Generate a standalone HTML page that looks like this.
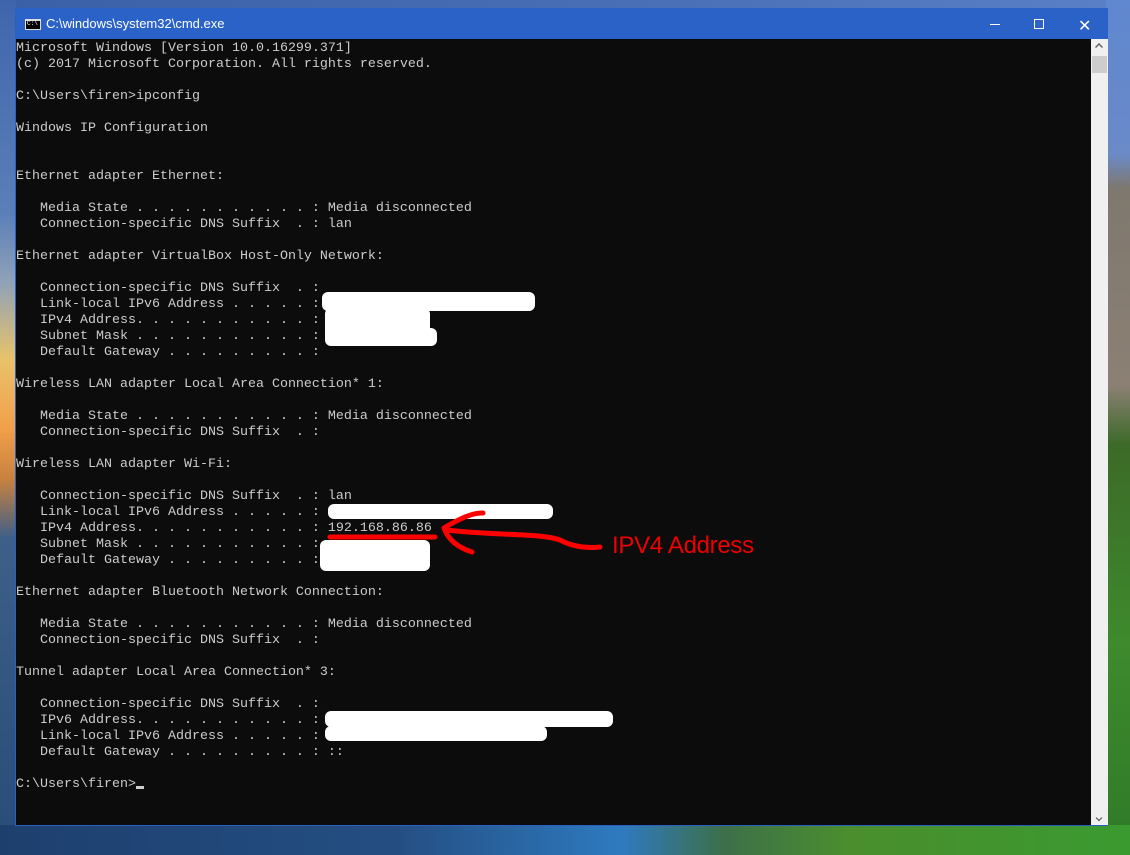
<!DOCTYPE html>
<html><head><meta charset="utf-8"><style>
*{margin:0;padding:0;box-sizing:border-box}
html,body{width:1130px;height:855px;overflow:hidden}
body{position:relative;background:#2a4f86}
.bgL{position:absolute;left:0;top:0;width:16px;height:855px;background:linear-gradient(180deg,#3f66ad 0%,#5a7fb8 25%,#8fa2b8 33%,#e8c26a 42%,#f2a04a 50%,#c8823e 56%,#3d5f88 63%,#284c78 100%)}
.bgR{position:absolute;right:0;top:0;width:24px;height:855px;background:linear-gradient(180deg,#5f87cf 0%,#6a8ac8 18%,#7e786e 22%,#8c8074 45%,#3c6a28 52%,#3e8a2c 75%,#2f7a28 100%)}
.bgT{position:absolute;left:0;top:0;width:1130px;height:10px;background:linear-gradient(90deg,#3a60a8,#4a70b8 60%,#5a80c8)}
.bgB{position:absolute;left:0;top:825px;width:1130px;height:30px;background:linear-gradient(90deg,#1d3f6e 0%,#244e82 35%,#2e7ac0 55%,#3d6f4a 64%,#4a8e2e 75%,#3a9a30 100%)}
.win{position:absolute;left:15px;top:8px;width:1093px;height:818px;background:#0c0c0c;border:1px solid #2a5fc4}
.title{position:absolute;left:0;top:0;width:100%;height:30px;background:#2b62c8;color:#fff;font:13px "Liberation Sans",sans-serif}
.title .t{position:absolute;left:30px;top:7px}
.ico{position:absolute;left:9px;top:10px;width:16px;height:11px;background:#000;border:1px solid #ddd;border-top:2px solid #ddd}
.ico:after{content:"C:\\";position:absolute;left:1px;top:-1px;font:6px "Liberation Mono",monospace;color:#fff}
.min{position:absolute;left:974px;top:15px;width:10px;height:1px;background:#fff}
.max{position:absolute;left:1018px;top:10px;width:10px;height:10px;border:1px solid #fff}
.cls{position:absolute;left:1062px;top:7px;color:#fff;font:16px "Liberation Sans",sans-serif}
.sb{position:absolute;left:1075px;top:30px;width:17px;height:786px;background:#f0f0f0}
.thumb{position:absolute;left:1px;top:17px;width:15px;height:17px;background:#cdcdcd}
.up{position:absolute;left:4px;top:4px;width:8px;height:8px;border-left:2px solid #606060;border-top:2px solid #606060;transform:rotate(45deg) scale(.7)}
.dn{position:absolute;left:4px;bottom:3px;width:8px;height:8px;border-right:2px solid #606060;border-bottom:2px solid #606060;transform:rotate(45deg) scale(.6)}
pre{position:absolute;left:0px;top:32px;font:13.33px/16px "Liberation Mono",monospace;color:#cccccc;white-space:pre}
.cur{display:inline-block;width:8px;height:3px;background:#ccc;vertical-align:-2px}
.w{position:absolute;background:#fff;border-radius:6px}
.lbl{position:absolute;left:612px;top:532px;color:#ee0000;font:24px "Liberation Sans",sans-serif;letter-spacing:-0.3px}
</style></head><body>
<div class="bgT"></div><div class="bgL"></div><div class="bgR"></div><div class="bgB"></div>
<div class="win">
<div class="title"><div class="ico"></div><div class="t">C:\windows\system32\cmd.exe</div><div class="min"></div><div class="max"></div><div class="cls">✕</div></div>
<pre>Microsoft Windows [Version 10.0.16299.371]
(c) 2017 Microsoft Corporation. All rights reserved.

C:\Users\firen>ipconfig

Windows IP Configuration


Ethernet adapter Ethernet:

   Media State . . . . . . . . . . . : Media disconnected
   Connection-specific DNS Suffix  . : lan

Ethernet adapter VirtualBox Host-Only Network:

   Connection-specific DNS Suffix  . :
   Link-local IPv6 Address . . . . . :
   IPv4 Address. . . . . . . . . . . :
   Subnet Mask . . . . . . . . . . . :
   Default Gateway . . . . . . . . . :

Wireless LAN adapter Local Area Connection* 1:

   Media State . . . . . . . . . . . : Media disconnected
   Connection-specific DNS Suffix  . :

Wireless LAN adapter Wi-Fi:

   Connection-specific DNS Suffix  . : lan
   Link-local IPv6 Address . . . . . :
   IPv4 Address. . . . . . . . . . . : 192.168.86.86
   Subnet Mask . . . . . . . . . . . :
   Default Gateway . . . . . . . . . :

Ethernet adapter Bluetooth Network Connection:

   Media State . . . . . . . . . . . : Media disconnected
   Connection-specific DNS Suffix  . :

Tunnel adapter Local Area Connection* 3:

   Connection-specific DNS Suffix  . :
   IPv6 Address. . . . . . . . . . . :
   Link-local IPv6 Address . . . . . :
   Default Gateway . . . . . . . . . : ::

C:\Users\firen&gt;<span class="cur"></span></pre>
<div class="sb"><div class="up"></div><div class="thumb"></div><div class="dn"></div></div>
</div>
<div class="w" style="left:322px;top:292px;width:213px;height:19px"></div>
<div class="w" style="left:325px;top:308px;width:105px;height:30px"></div>
<div class="w" style="left:325px;top:328px;width:112px;height:18px"></div>
<div class="w" style="left:328px;top:504px;width:225px;height:15px"></div>
<div class="w" style="left:320px;top:540px;width:110px;height:31px"></div>
<div class="w" style="left:325px;top:711px;width:288px;height:16px"></div>
<div class="w" style="left:325px;top:726px;width:222px;height:15px"></div>
<svg style="position:absolute;left:0;top:0" width="1130" height="855">
<g fill="none" stroke="#ff0000" stroke-width="5" stroke-linecap="round" stroke-linejoin="round">
<path d="M330 537 L435 537"/>
<path d="M444 528 Q470 512 483 513 M444 528 Q450 545 472 552 M446 530 C500 536 540 533 560 540 C575 548 590 548 600 547"/>
</g></svg>
<div class="lbl">IPV4 Address</div>
</body></html>
